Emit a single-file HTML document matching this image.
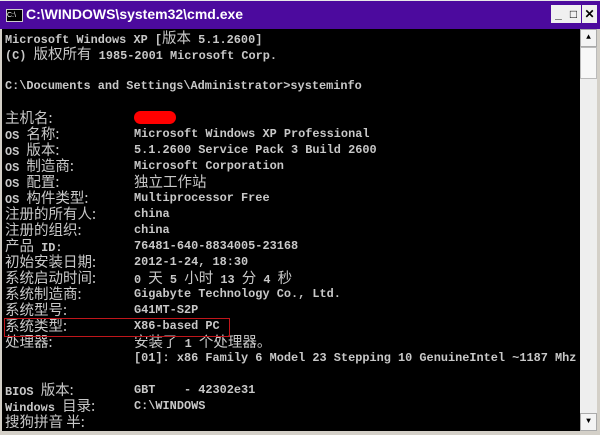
<!DOCTYPE html>
<html><head><style>
body{margin:0;width:600px;height:435px;background:#d4d0c8;overflow:hidden;position:relative;font-family:"Liberation Mono","Noto Sans CJK SC",monospace;}
#tb{position:absolute;left:0;top:0;width:600px;height:28px;background:#4c0a9e;border-top:1px solid #e8e8e8;}
#tt{position:absolute;left:26px;top:5px;color:#fff;font:bold 14px "Liberation Sans",sans-serif;}
#ic{position:absolute;left:6px;top:8px;width:15px;height:11px;background:#000;border:1px solid #ccc;color:#fff;font:7px "Liberation Sans",sans-serif;line-height:11px;}
.btn{position:absolute;top:4px;width:15px;height:18px;background:#f0f0f0;font:bold 12px "Liberation Sans",sans-serif;text-align:center;line-height:18px;color:#000;}
#con{position:absolute;left:2px;top:29px;width:578px;height:402px;background:#000;}
#sb{position:absolute;left:580px;top:29px;width:17px;height:402px;background:#eeeeee;}
.r{position:absolute;left:3px;height:16px;color:#c8c8c8;font-size:11.9px;font-weight:bold;line-height:16px;white-space:pre;}
.v{position:absolute;left:129px;top:0;}
.c{font-family:"Noto Sans CJK SC",sans-serif;font-size:14.5px;font-weight:normal;}
</style></head><body>
<div id="tb"><div id="ic">C:\</div><div id="tt">C:\WINDOWS\system32\cmd.exe</div>
<div class="btn" style="left:551px">_</div><div class="btn" style="left:566px">□</div><div class="btn" style="left:582px">✕</div></div>
<div id="con">
<div class="r" style="top:1px">Microsoft Windows XP [<span class="c">版本</span> 5.1.2600]</div>
<div class="r" style="top:17px">(C) <span class="c">版权所有</span> 1985-2001 Microsoft Corp.</div>
<div class="r" style="top:49px">C:\Documents and Settings\Administrator&gt;systeminfo</div>
<div class="r" style="top:81px"><span class="c">主机名:</span><span class="v"><span style="display:inline-block;width:42px;height:13px;background:#f00;border-radius:7px;vertical-align:middle"></span></span></div>
<div class="r" style="top:97px">OS <span class="c">名称:</span><span class="v">Microsoft Windows XP Professional</span></div>
<div class="r" style="top:113px">OS <span class="c">版本:</span><span class="v">5.1.2600 Service Pack 3 Build 2600</span></div>
<div class="r" style="top:129px">OS <span class="c">制造商:</span><span class="v">Microsoft Corporation</span></div>
<div class="r" style="top:145px">OS <span class="c">配置:</span><span class="v c">独立工作站</span></div>
<div class="r" style="top:161px">OS <span class="c">构件类型:</span><span class="v">Multiprocessor Free</span></div>
<div class="r" style="top:177px"><span class="c">注册的所有人:</span><span class="v">china</span></div>
<div class="r" style="top:193px"><span class="c">注册的组织:</span><span class="v">china</span></div>
<div class="r" style="top:209px"><span class="c">产品</span> ID:<span class="v">76481-640-8834005-23168</span></div>
<div class="r" style="top:225px"><span class="c">初始安装日期:</span><span class="v">2012-1-24, 18:30</span></div>
<div class="r" style="top:241px"><span class="c">系统启动时间:</span><span class="v">0 <span class="c">天</span> 5 <span class="c">小时</span> 13 <span class="c">分</span> 4 <span class="c">秒</span></span></div>
<div class="r" style="top:257px"><span class="c">系统制造商:</span><span class="v">Gigabyte Technology Co., Ltd.</span></div>
<div class="r" style="top:273px"><span class="c">系统型号:</span><span class="v">G41MT-S2P</span></div>
<div class="r" style="top:289px"><span class="c">系统类型:</span><span class="v">X86-based PC</span></div>
<div class="r" style="top:305px"><span class="c">处理器:</span><span class="v"><span class="c">安装了</span> 1 <span class="c">个处理器。</span></span></div>
<div class="r" style="top:321px"><span class="v">[01]: x86 Family 6 Model 23 Stepping 10 GenuineIntel ~1187 Mhz</span></div>
<div class="r" style="top:353px">BIOS <span class="c">版本:</span><span class="v">GBT    - 42302e31</span></div>
<div class="r" style="top:369px">Windows <span class="c">目录:</span><span class="v">C:\WINDOWS</span></div>
<div class="r" style="top:385px"><span class="c">搜狗拼音 半:</span></div>
<div style="position:absolute;left:2px;top:289px;width:224px;height:17px;border:1px solid #c0161b;"></div>
</div>
<div id="sb"><div style="height:16px;background:#f4f4f4;border:1px solid #aaa;text-align:center;font-size:8px;line-height:16px">▲</div><div style="height:30px;background:#f8f8f8;border:1px solid #bbb"></div><div style="position:absolute;bottom:0;width:15px;height:16px;background:#f4f4f4;border:1px solid #aaa;text-align:center;font-size:8px;line-height:16px">▼</div></div>
</body></html>
